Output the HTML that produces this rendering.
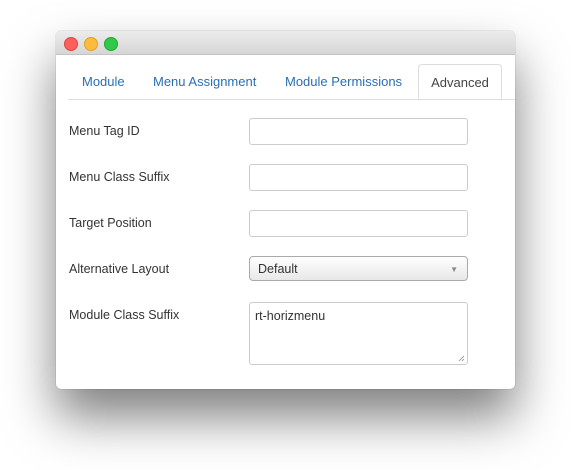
<!DOCTYPE html>
<html><head><style>
body{margin:0;width:571px;height:470px;background:#fff;position:relative;overflow:hidden;font-family:"Liberation Sans",sans-serif;}
.win{position:absolute;left:56px;top:31px;width:459px;height:358px;background:#fff;border-radius:5px;box-shadow:0 28px 50px rgba(0,0,0,0.5),0 0 1px rgba(0,0,0,0.4);overflow:hidden}
.tb{height:23px;background:linear-gradient(#ececec,#d6d6d6);border-bottom:1px solid #c4c4c4;position:relative}
.dot{position:absolute;top:6px;width:12px;height:12px;border-radius:50%}
.tabline{position:absolute;left:12px;right:0;top:68px;border-top:1px solid #ddd}
.tab{position:absolute;top:43px;font-size:13px;color:#2a6fb5}
.adv{position:absolute;left:362px;top:33px;height:35px;border:1px solid #ddd;border-bottom:1px solid #fff;border-radius:4px 4px 0 0;background:#fff;color:#444;font-size:13px;text-align:center;line-height:35px;box-sizing:border-box;width:84px}
.lbl{position:absolute;left:13px;font-size:12.5px;color:#333}
.in{position:absolute;left:193px;width:219px;height:27px;border:1px solid #ccc;border-radius:3px;box-sizing:border-box;background:#fff}
</style></head><body>
<div class="win">
<div class="tb">
<div class="dot" style="left:8px;background:#fc605c;border:0.5px solid #e0443e"></div>
<div class="dot" style="left:28px;background:#fdbc40;border:0.5px solid #dea123"></div>
<div class="dot" style="left:48px;background:#34c84a;border:0.5px solid #1aab29"></div>
</div>
<div class="tabline"></div>
<div class="tab" style="left:26px">Module</div>
<div class="tab" style="left:97px">Menu Assignment</div>
<div class="tab" style="left:229px">Module Permissions</div>
<div class="adv">Advanced</div>
<div class="lbl" style="top:93px">Menu Tag ID</div>
<div class="in" style="top:87px"></div>
<div class="lbl" style="top:139px">Menu Class Suffix</div>
<div class="in" style="top:133px"></div>
<div class="lbl" style="top:185px">Target Position</div>
<div class="in" style="top:179px"></div>
<div class="lbl" style="top:231px">Alternative Layout</div>
<div class="in" style="top:225px;height:25px;border-color:#aaa;border-radius:4px;background:linear-gradient(#fff,#e8e8e8);font-size:12.5px;color:#333;padding:5px 8px">Default<span style="position:absolute;right:9px;top:8px;font-size:8px;color:#888">▼</span></div>
<div class="lbl" style="top:277px">Module Class Suffix</div>
<div class="in" style="top:271px;height:63px;font-size:12.5px;color:#333;padding:6px 5px">rt-horizmenu
<svg style="position:absolute;right:2px;bottom:2px" width="7" height="7"><path d="M1 6L6 1M4 6L6 4" stroke="#888" stroke-width="0.8"/></svg></div>
</div>
</body></html>
